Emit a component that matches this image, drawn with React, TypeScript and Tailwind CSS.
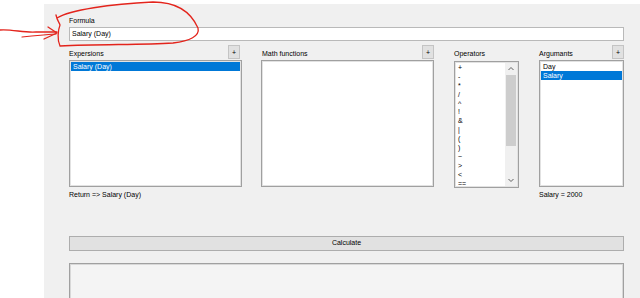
import React from "react";

const font = { fontFamily: '"Liberation Sans", Arial, sans-serif' };

function PlusBtn({ className = "" }: { className?: string }) {
  return (
    <div
      className={`w-[12px] h-[14px] bg-[#e1e1e1] border border-[#c4c4c4] flex items-center justify-center text-[7px] leading-none text-black ${className}`}
    >
      +
    </div>
  );
}

function ListBox({
  children,
  className = "",
}: {
  children?: React.ReactNode;
  className?: string;
}) {
  return (
    <div
      className={`h-[127px] bg-white border border-[#a0a0a0] shadow-[inset_0_0_0_1px_#e2e2e2] p-[1px] overflow-hidden ${className}`}
    >
      {children}
    </div>
  );
}

function Row({ text, selected = false }: { text: string; selected?: boolean }) {
  return (
    <div
      className={`h-[9px] leading-[9px] text-[7px] pl-[2px] whitespace-nowrap ${
        selected ? "bg-[#0078d7] text-white" : "text-black"
      }`}
    >
      {text}
    </div>
  );
}

const ops = ["+", "-", "*", "/", "^", "!", "&", "|", "(", ")", "~", ">", "<", "=="];

export default function App() {
  return (
    <div className="relative w-[640px] h-[298px] bg-white overflow-hidden text-black" style={font}>
      <div className="ml-[44px] mt-[4px] h-[294px] bg-[#f0f0f0] pl-[25px] pr-[16px] pt-[12px] overflow-hidden">
        <div className="text-[7px] leading-[9px] h-[9px]">Formula</div>
        <div className="mt-[2px] h-[14px] bg-white border border-[#b9b9b9] flex items-center pl-[2px] text-[7px]">
          Salary (Day)
        </div>

        <div className="mt-[4px] flex">
          {/* Expersions */}
          <div className="w-[173px] flex flex-col">
            <div className="h-[15px] flex items-start justify-between">
              <span className="text-[7px] leading-[9px] mt-[4px]">Expersions</span>
              <PlusBtn className="mr-[2px]" />
            </div>
            <ListBox>
              <Row text="Salary (Day)" selected />
            </ListBox>
            <div className="mt-[3px] text-[7px] leading-[9px]">Return =&gt; Salary (Day)</div>
          </div>

          {/* Math functions */}
          <div className="w-[173px] ml-[19px] flex flex-col">
            <div className="h-[15px] flex items-start justify-between">
              <span className="text-[7px] leading-[9px] mt-[4px] ml-[1px]">Math functions</span>
              <PlusBtn />
            </div>
            <ListBox />
          </div>

          {/* Operators */}
          <div className="w-[65px] ml-[20px] flex flex-col">
            <div className="h-[16px] flex items-start">
              <span className="text-[7px] leading-[9px] mt-[4px]">Operators</span>
            </div>
            <div className="h-[127px] bg-white border border-[#a0a0a0] shadow-[inset_0_0_0_1px_#e2e2e2] p-[1px] overflow-hidden flex">
              <div className="flex-1 overflow-hidden">
                {ops.map((o, i) => (
                  <div key={i} className="h-[8.9px] leading-[9px] text-[7px] pl-[2px]">
                    {o}
                  </div>
                ))}
              </div>
              <div className="w-[12px] bg-[#f0f0f0] flex flex-col items-center">
                <svg width="12" height="12" viewBox="0 0 12 12" className="shrink-0">
                  <path d="M3.5 7 L6 4.5 L8.5 7" fill="none" stroke="#606060" strokeWidth="1" />
                </svg>
                <div className="w-[10px] h-[71px] bg-[#cdcdcd]" />
                <div className="flex-1" />
                <svg width="12" height="12" viewBox="0 0 12 12" className="shrink-0">
                  <path d="M3.5 5 L6 7.5 L8.5 5" fill="none" stroke="#606060" strokeWidth="1" />
                </svg>
              </div>
            </div>
          </div>

          {/* Arguments */}
          <div className="w-[85px] ml-[20px] flex flex-col">
            <div className="h-[15px] flex items-start justify-between">
              <span className="text-[7px] leading-[9px] mt-[4px]">Argumants</span>
              <PlusBtn />
            </div>
            <ListBox>
              <Row text="Day" />
              <Row text="Salary" selected />
            </ListBox>
            <div className="mt-[3px] text-[7px] leading-[9px]">Salary = 2000</div>
          </div>
        </div>

        <div className="mt-[37px] h-[15px] bg-[#e1e1e1] border border-[#adadad] flex items-center justify-center text-[7px]">
          Calculate
        </div>

        <div className="mt-[12px] h-[60px] bg-[#f4f4f4] border border-[#a0a0a0] shadow-[inset_0_0_0_1px_#d8d8d8]" />
      </div>

      {/* red annotation */}
      <svg
        className="absolute left-0 top-0 pointer-events-none"
        width="640"
        height="298"
        viewBox="0 0 640 298"
      >
        <path
          d="M57 18 C70 10, 110 4, 153 2 C175 2, 190 10, 198 28 C200 36, 190 41, 173 43 C140 45, 100 44, 60 46 C57 40, 58 30, 60 25 C59 22, 57 20, 56 15"
          fill="none"
          stroke="#e3241c"
          strokeWidth="1.3"
          strokeLinecap="round"
        />
        <path
          d="M0 30 C12 29, 24 33, 36 32 C44 32, 50 32, 57 32"
          fill="none"
          stroke="#e3241c"
          strokeWidth="1.3"
          strokeLinecap="round"
        />
        <path
          d="M22 37 C32 36, 42 35, 56 34"
          fill="none"
          stroke="#e3241c"
          strokeWidth="1.2"
          strokeLinecap="round"
        />
        <path
          d="M48 27 L57 33 L44 39"
          fill="none"
          stroke="#e3241c"
          strokeWidth="1.3"
          strokeLinecap="round"
          strokeLinejoin="round"
        />
      </svg>
    </div>
  );
}
